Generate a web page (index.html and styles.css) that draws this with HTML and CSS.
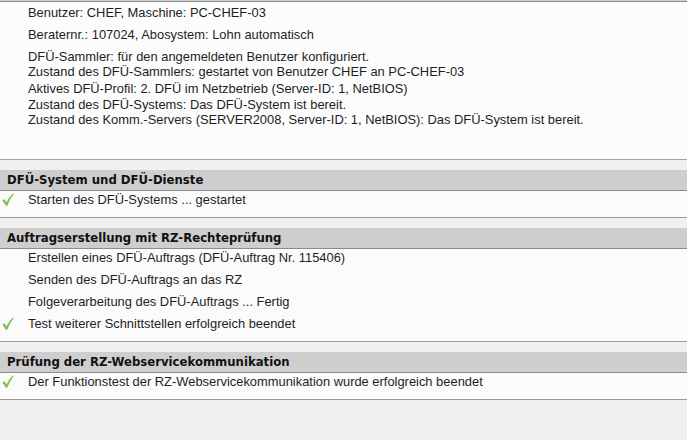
FILE: index.html
```html
<!DOCTYPE html>
<html lang="de">
<head>
    <meta charset="UTF-8">
    <title>DFÜ-Funktionstest</title>
    <link rel="stylesheet" href="styles.css">
</head>
<body>
    <div class="top-bar"></div>

    <!-- Allgemeine Informationen -->
    <div class="info-panel">
        <p class="info-row">Benutzer: CHEF, Maschine: PC-CHEF-03</p>
        <p class="info-row">Beraternr.: 107024, Abosystem: Lohn automatisch</p>
        <div class="info-block">
            <p>DFÜ-Sammler: für den angemeldeten Benutzer konfiguriert.</p>
            <p>Zustand des DFÜ-Sammlers: gestartet von Benutzer CHEF an PC-CHEF-03</p>
        </div>
        <div class="info-block second">
            <p>Aktives DFÜ-Profil: 2. DFÜ im Netzbetrieb (Server-ID: 1, NetBIOS)</p>
            <p>Zustand des DFÜ-Systems: Das DFÜ-System ist bereit.</p>
            <p>Zustand des Komm.-Servers (SERVER2008, Server-ID: 1, NetBIOS): Das DFÜ-System ist bereit.</p>
        </div>
    </div>

    <!-- Abschnitt 1 -->
    <div class="section">
        <div class="section-header">DFÜ-System und DFÜ-Dienste</div>
        <div class="section-rows">
            <div class="row ok">
                <span class="icon"><svg viewBox="0 0 12 13" width="12" height="13"><path d="M0.3 7.2 L2.6 6.3 L4.4 9.2 Q7 3.8 11.2 0.3 L11.8 1 Q8 5.6 5.2 12.8 L4 12.9 Z" fill="#82c24f"/></svg></span>
                Starten des DFÜ-Systems ... gestartet
            </div>
        </div>
    </div>

    <!-- Abschnitt 2 -->
    <div class="section">
        <div class="section-header">Auftragserstellung mit RZ-Rechteprüfung</div>
        <div class="section-rows">
            <div class="row"><span class="icon"></span>Erstellen eines DFÜ-Auftrags (DFÜ-Auftrag Nr. 115406)</div>
            <div class="row"><span class="icon"></span>Senden des DFÜ-Auftrags an das RZ</div>
            <div class="row"><span class="icon"></span>Folgeverarbeitung des DFÜ-Auftrags ... Fertig</div>
            <div class="row ok">
                <span class="icon"><svg viewBox="0 0 12 13" width="12" height="13"><path d="M0.3 7.2 L2.6 6.3 L4.4 9.2 Q7 3.8 11.2 0.3 L11.8 1 Q8 5.6 5.2 12.8 L4 12.9 Z" fill="#82c24f"/></svg></span>
                Test weiterer Schnittstellen erfolgreich beendet
            </div>
        </div>
    </div>

    <!-- Abschnitt 3 -->
    <div class="section">
        <div class="section-header">Prüfung der RZ-Webservicekommunikation</div>
        <div class="section-rows">
            <div class="row ok">
                <span class="icon"><svg viewBox="0 0 12 13" width="12" height="13"><path d="M0.3 7.2 L2.6 6.3 L4.4 9.2 Q7 3.8 11.2 0.3 L11.8 1 Q8 5.6 5.2 12.8 L4 12.9 Z" fill="#82c24f"/></svg></span>
                Der Funktionstest der RZ-Webservicekommunikation wurde erfolgreich beendet
            </div>
        </div>
    </div>
</body>
</html>
```

FILE: styles.css
```css
* {
    margin: 0;
    padding: 0;
    box-sizing: border-box;
}

body {
    font-family: Tahoma, "Liberation Sans", Arial, sans-serif;
    font-size: 12.9px;
    color: #1e1e1e;
    background-color: #f1f0ee;
    width: 687px;
    height: 440px;
    overflow: hidden;
}

.top-bar {
    height: 2px;
    background-color: #cdcdcd;
    border-bottom: 1px solid #8c8c8c;
}

.info-panel {
    background-color: #fcfcfc;
    padding: 0 0 31px 28px;
    border-bottom: 1px solid #a2a2a2;
}

.info-row {
    height: 22px;
    line-height: 22px;
}

.info-block {
    padding-top: 3px;
    line-height: 15px;
}

.info-block.second {
    padding-top: 2px;
    line-height: 15.5px;
}

.section {
    padding-top: 10px;
}

.section-header {
    height: 21px;
    line-height: 20px;
    padding-left: 7px;
    background-color: #cecece;
    border-bottom: 1px solid #8c8c8c;
    font-family: "DejaVu Sans", Verdana, sans-serif;
    font-weight: bold;
    font-size: 11.7px;
    color: #111;
}

.section-rows {
    background-color: #fbfbfb;
    padding-bottom: 4px;
    border-bottom: 1px solid #9a9a9a;
}

.row {
    display: flex;
    align-items: center;
    height: 22px;
    padding-bottom: 4px;
}

.icon {
    display: flex;
    align-items: center;
    width: 28px;
    padding-left: 2px;
}
```
